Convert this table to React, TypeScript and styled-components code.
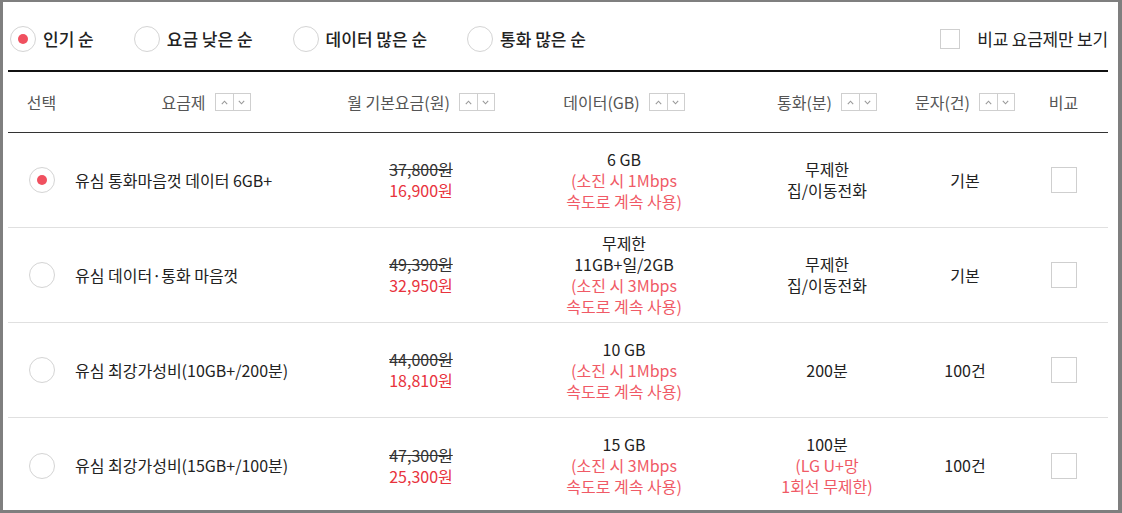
import React from "react";
import styled, { createGlobalStyle } from "styled-components";

const GlobalStyle = createGlobalStyle`
  html, body { margin: 0; padding: 0; background: #fff; }
  body { font-family: "Noto Sans CJK KR", "Noto Sans", sans-serif; color: #222; }
  * { box-sizing: border-box; }
`;

const COLS = "67px 262px 168px 238px 168px 108px 89px";

const Frame = styled.div`
  width: 1122px;
  height: 513px;
  border-style: solid;
  border-color: #7f7f7f;
  border-width: 2px 4px 3px 3px;
  padding: 0 10px 0 5px;
  overflow: hidden;
  background: #fff;
`;

const TopBar = styled.div`
  height: 68px;
  padding: 6px 0 0 2px;
  display: flex;
  align-items: center;
`;

const SortOptions = styled.div`
  display: flex;
  align-items: center;
  gap: 40px;
  flex: 1;
`;

const OptionLabel = styled.label`
  display: flex;
  align-items: center;
  gap: 7px;
  font-size: 17px;
  line-height: 20px;
  font-weight: 500;
  color: #222;
`;

const RadioCircle = styled.span<{ $on?: boolean }>`
  width: 26px;
  height: 26px;
  border-radius: 50%;
  border: 1px solid #d4d4d4;
  background: #fff;
  display: inline-flex;
  align-items: center;
  justify-content: center;
  flex-shrink: 0;
  &::after {
    content: "";
    width: 10px;
    height: 10px;
    border-radius: 50%;
    background: ${(p) => (p.$on ? "#f0505f" : "transparent")};
  }
`;

const CompareOnly = styled.label`
  display: flex;
  align-items: center;
  gap: 17px;
  font-size: 17px;
  line-height: 20px;
  color: #222;
  letter-spacing: -0.2px;
`;

const CheckBox = styled.span<{ $size: number }>`
  width: ${(p) => p.$size}px;
  height: ${(p) => p.$size}px;
  border: 1px solid #cfcfcf;
  background: #fff;
  display: inline-block;
  flex-shrink: 0;
`;

const HeaderRow = styled.div`
  display: grid;
  grid-template-columns: ${COLS};
  height: 63px;
  border-top: 2px solid #111;
  border-bottom: 1px solid #333;
  align-items: center;
`;

const HeadCell = styled.div`
  display: flex;
  align-items: center;
  justify-content: center;
  gap: 9px;
  font-size: 16px;
  line-height: 20px;
  color: #555;
`;

const SortBox = styled.span`
  display: inline-flex;
  border: 1px solid #cfcfcf;
  height: 18px;
`;

const SortHalf = styled.span`
  width: 17px;
  height: 16px;
  display: inline-flex;
  align-items: center;
  justify-content: center;
  & + & { border-left: 1px solid #cfcfcf; }
`;

const Row = styled.div`
  display: grid;
  grid-template-columns: ${COLS};
  height: 95px;
  border-bottom: 1px solid #e0e0e0;
  align-items: center;
  &:last-child { border-bottom: none; }
`;

const CenterCell = styled.div`
  display: flex;
  flex-direction: column;
  align-items: center;
  justify-content: center;
  text-align: center;
  font-size: 16px;
  line-height: 21px;
  color: #222;
`;

const NameCell = styled.div`
  font-size: 16px;
  line-height: 21px;
  color: #222;
`;

const OldPrice = styled.span`
  text-decoration: line-through;
  color: #333;
`;

const SalePrice = styled.span`
  color: #e8333d;
`;

const Note = styled.span`
  color: #f05a66;
`;

const Chevron = ({ up }: { up?: boolean }) => (
  <svg width="7" height="5" viewBox="0 0 7 5">
    <path
      d={up ? "M0.8 4.2 L3.5 1.2 L6.2 4.2" : "M0.8 0.8 L3.5 3.8 L6.2 0.8"}
      fill="none"
      stroke="#999"
      strokeWidth="1.1"
    />
  </svg>
);

const Sort = () => (
  <SortBox>
    <SortHalf>
      <Chevron up />
    </SortHalf>
    <SortHalf>
      <Chevron />
    </SortHalf>
  </SortBox>
);

type Plan = {
  name: string;
  orig: string;
  sale: string;
  data: string[];
  dataNote: string[];
  call: string[];
  callNote: string[];
  msg: string;
  selected?: boolean;
};

const plans: Plan[] = [
  {
    name: "유심 통화마음껏 데이터 6GB+",
    orig: "37,800원",
    sale: "16,900원",
    data: ["6 GB"],
    dataNote: ["(소진 시 1Mbps", "속도로 계속 사용)"],
    call: ["무제한", "집/이동전화"],
    callNote: [],
    msg: "기본",
    selected: true,
  },
  {
    name: "유심 데이터·통화 마음껏",
    orig: "49,390원",
    sale: "32,950원",
    data: ["무제한", "11GB+일/2GB"],
    dataNote: ["(소진 시 3Mbps", "속도로 계속 사용)"],
    call: ["무제한", "집/이동전화"],
    callNote: [],
    msg: "기본",
  },
  {
    name: "유심 최강가성비(10GB+/200분)",
    orig: "44,000원",
    sale: "18,810원",
    data: ["10 GB"],
    dataNote: ["(소진 시 1Mbps", "속도로 계속 사용)"],
    call: ["200분"],
    callNote: [],
    msg: "100건",
  },
  {
    name: "유심 최강가성비(15GB+/100분)",
    orig: "47,300원",
    sale: "25,300원",
    data: ["15 GB"],
    dataNote: ["(소진 시 3Mbps", "속도로 계속 사용)"],
    call: ["100분"],
    callNote: ["(LG U+망", "1회선 무제한)"],
    msg: "100건",
  },
];

const sortOptions = ["인기 순", "요금 낮은 순", "데이터 많은 순", "통화 많은 순"];

export default function App() {
  return (
    <>
      <GlobalStyle />
      <Frame>
        <TopBar>
          <SortOptions>
            {sortOptions.map((o, i) => (
              <OptionLabel key={o}>
                <RadioCircle $on={i === 0} />
                {o}
              </OptionLabel>
            ))}
          </SortOptions>
          <CompareOnly>
            <CheckBox $size={20} />
            비교 요금제만 보기
          </CompareOnly>
        </TopBar>
        <HeaderRow>
          <HeadCell>선택</HeadCell>
          <HeadCell>
            요금제 <Sort />
          </HeadCell>
          <HeadCell>
            월 기본요금(원) <Sort />
          </HeadCell>
          <HeadCell>
            데이터(GB) <Sort />
          </HeadCell>
          <HeadCell>
            통화(분) <Sort />
          </HeadCell>
          <HeadCell>
            문자(건) <Sort />
          </HeadCell>
          <HeadCell>비교</HeadCell>
        </HeaderRow>
        {plans.map((p) => (
          <Row key={p.name}>
            <CenterCell>
              <RadioCircle $on={p.selected} />
            </CenterCell>
            <NameCell>{p.name}</NameCell>
            <CenterCell>
              <OldPrice>{p.orig}</OldPrice>
              <SalePrice>{p.sale}</SalePrice>
            </CenterCell>
            <CenterCell>
              {p.data.map((d) => (
                <span key={d}>{d}</span>
              ))}
              {p.dataNote.map((d) => (
                <Note key={d}>{d}</Note>
              ))}
            </CenterCell>
            <CenterCell>
              {p.call.map((d) => (
                <span key={d}>{d}</span>
              ))}
              {p.callNote.map((d) => (
                <Note key={d}>{d}</Note>
              ))}
            </CenterCell>
            <CenterCell>{p.msg}</CenterCell>
            <CenterCell>
              <CheckBox $size={26} />
            </CenterCell>
          </Row>
        ))}
      </Frame>
    </>
  );
}
